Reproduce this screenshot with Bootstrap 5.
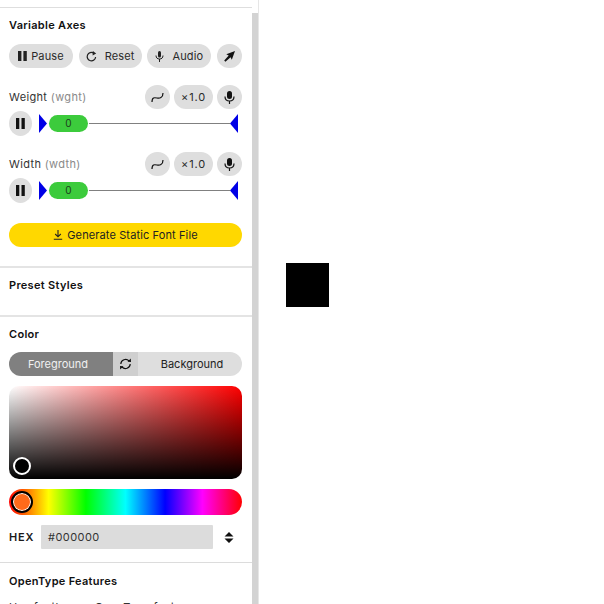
<!DOCTYPE html>
<html lang="en"><head><meta charset="utf-8">
<link href="https://cdn.jsdelivr.net/npm/bootstrap@5.3.0/dist/css/bootstrap.min.css" rel="stylesheet">
<style>
html,body{height:604px;overflow:hidden;background:#fff}
body{font-family:Inter,"Liberation Sans",sans-serif;color:#1a1a1a;font-size:11px}
.shell{height:604px;width:604px}
.side{width:259px;height:604px;border-right:1px solid #e6e6e6;overflow:hidden;flex:none}
.panel{width:252px;height:604px;overflow:hidden;flex:none}
.rail{width:6px;margin-top:13px;background:#d3d3d3;flex:none}
.topline{height:8px;border-bottom:1px solid #dedede}
.sect{padding:0 10px 0 9px}
.sect-axes{height:260px;border-bottom:2px solid #e4e4e4}
.sect-preset{height:49px;border-bottom:2px solid #e4e4e4}
.sect-color{height:246px;border-bottom:1px solid #dcdcdc}
.ttl{font-size:11px;font-weight:600;line-height:14px;color:#111;letter-spacing:.3px}
.ttl-axes{padding-top:10px}
.ttl-preset{padding-top:10px}
.ttl-color{padding-top:10px}
.pill{height:24px;background:#dedede;border-radius:12px;color:#2a2a2a;font-size:11px;letter-spacing:.15px;white-space:nowrap}
.p-pause{width:64px}.p-reset{width:63px}.p-audio{width:64px}.p-round{width:25px}.p-rate{width:39px;letter-spacing:.8px}
.toolrow{margin-top:12px}
.axis{height:24px;margin-top:17px}
.axis-two{margin-top:16px}
.axname{font-size:11px;letter-spacing:.35px;color:#333}
.axname span{color:#8a8a8a}
.acts{gap:4px}
.slider{margin-top:2px;height:25px}
.pround{width:23px;height:25px;background:#dedede;border-radius:50%;flex:none}
.track{flex:none;margin-left:7px;height:25px;width:199px}
.line{flex:1;height:1px;background:#808080;margin-left:1px}
.thumb{width:39px;height:17px;background:#3ccb3c;border-radius:8.5px;font-size:10px;color:#1d3d1d;line-height:17px;text-align:center;margin-left:2px}
.tri-l{width:8px;height:19px;background:#0000e6;clip-path:polygon(0 0,100% 50%,0 100%)}
.tri-r{width:8px;height:19px;background:#0000e6;clip-path:polygon(100% 0,0 50%,100% 100%)}
.gen{margin-top:20px;height:24px;background:#ffd800;border-radius:12px;font-size:11px;color:#222;letter-spacing:.12px}
.swap{margin-top:11px;height:24px;border-radius:12px;overflow:hidden;font-size:11px}
.fg{width:104px;background:#808080;color:#f0f0f0;padding-right:6px}
.mid{width:25px;background:#cfcfcf}
.bg2{flex:1;background:#dedede;color:#222;padding-left:4px}
.sv{position:relative;margin-top:10px;height:93px;border-radius:10px;background:linear-gradient(to top,#000,rgba(0,0,0,0)),linear-gradient(to right,#fff,#ff0000)}
.hue{position:relative;margin-top:10px;height:26px;border-radius:13px;background:linear-gradient(to right,#ff0000 0%,#ffff00 17%,#00ff00 33%,#00ffff 50%,#0000ff 67%,#ff00ff 83%,#ff0000 100%)}
.dot1{position:absolute;left:4px;bottom:4px;width:18px;height:18px;border-radius:50%;background:#000;border:2px solid #fff}
.dot2{position:absolute;left:2px;top:2px;width:22px;height:22px;border-radius:50%;background:#ff6a1a;border:2px solid #000;box-shadow:inset 0 0 0 1px #fff}
.hexrow{margin-top:10px;height:24px}
.hexlab{width:32px;font-weight:600;font-size:11px;letter-spacing:.8px;color:#1a1a1a}
.hexbox{width:172px;height:24px;background:#dcdcdc;border-radius:1px;padding-left:7px;line-height:24px;font-size:11px;letter-spacing:.45px;color:#333}
.updn{margin-left:11px}
.ttl-ot{padding-top:11px}
.otrow{margin-top:12px;font-size:11px;letter-spacing:.3px;color:#333;white-space:nowrap;line-height:14px}
.stage{flex:1;position:relative}
.blacksq{position:absolute;left:27px;top:263px;width:43px;height:44px;background:#000}
</style></head><body>
<div class="shell d-flex">
<div class="side d-flex">
<div class="panel">
<div class="topline"></div>
<div class="sect sect-axes">
<div class="ttl ttl-axes">Variable Axes</div>
<div class="d-flex justify-content-between toolrow">
<div class="pill p-pause d-flex align-items-center justify-content-center gap-1"><svg width="9" height="10" viewBox="0 0 9 10"><path d="M0 0h3.400v10H0zM5.400 0h3.400v10H5.400z" fill="#222"/></svg>Pause</div>
<div class="pill p-reset d-flex align-items-center justify-content-center gap-2"><svg width="11" height="11" viewBox="0 0 11 11"><path d="M9.600 6A4.200 4.200 0 1 1 7.600 2.100" fill="none" stroke="#222" stroke-width="1.200"/><path d="M6.800 0l3.400 2.500-3.600 2z" fill="#222"/></svg>Reset</div>
<div class="pill p-audio d-flex align-items-center justify-content-center gap-2"><svg width="9" height="11" viewBox="0 0 9 11"><rect x="3" y="0" width="3" height="6.400" rx="1.500" fill="#222"/><path d="M1 4.500c0 2.400 1.400 3.500 3.500 3.500S8 6.900 8 4.500M4.500 8v3" fill="none" stroke="#222" stroke-width="1"/></svg>Audio</div>
<div class="pill p-round d-flex align-items-center justify-content-center"><svg width="11" height="11" viewBox="0 0 11 11"><path d="M11 0L7.800 8.700 6.600 6.300 1.400 10.800 0.200 9.600 4.700 4.400 2.300 3.200z" fill="#111"/></svg></div>
</div>
<div class="d-flex align-items-center justify-content-between axis">
<div class="axname">Weight <span>(wght)</span></div>
<div class="d-flex acts">
<div class="pill p-round d-flex align-items-center justify-content-center"><svg width="13" height="11" viewBox="0 0 13 11"><path d="M1 10C1 5 3.500 5.500 6 6S12 6 12 1" fill="none" stroke="#111" stroke-width="1.200"/></svg></div>
<div class="pill p-rate d-flex align-items-center justify-content-center">×1.0</div>
<div class="pill p-round d-flex align-items-center justify-content-center"><svg width="11" height="13" viewBox="0 0 11 13"><rect x="3" y="0" width="5" height="8" rx="2.500" fill="#111"/><path d="M1 5.500c0 3 1.800 4.500 4.500 4.500S10 8.500 10 5.500M5.500 10v3" fill="none" stroke="#111" stroke-width="1.200"/></svg></div>
</div>
</div>
<div class="d-flex align-items-center slider">
<div class="pround d-flex align-items-center justify-content-center"><svg width="9" height="11" viewBox="0 0 9 11"><path d="M0 0h3.300v11H0zM5.500 0h3.300v11H5.500z" fill="#111"/></svg></div>
<div class="track d-flex align-items-center"><div class="tri-l"></div><div class="thumb">0</div><div class="line"></div><div class="tri-r"></div></div>
</div>
<div class="d-flex align-items-center justify-content-between axis axis-two">
<div class="axname">Width <span>(wdth)</span></div>
<div class="d-flex acts">
<div class="pill p-round d-flex align-items-center justify-content-center"><svg width="13" height="11" viewBox="0 0 13 11"><path d="M1 10C1 5 3.500 5.500 6 6S12 6 12 1" fill="none" stroke="#111" stroke-width="1.200"/></svg></div>
<div class="pill p-rate d-flex align-items-center justify-content-center">×1.0</div>
<div class="pill p-round d-flex align-items-center justify-content-center"><svg width="11" height="13" viewBox="0 0 11 13"><rect x="3" y="0" width="5" height="8" rx="2.500" fill="#111"/><path d="M1 5.500c0 3 1.800 4.500 4.500 4.500S10 8.500 10 5.500M5.500 10v3" fill="none" stroke="#111" stroke-width="1.200"/></svg></div>
</div>
</div>
<div class="d-flex align-items-center slider">
<div class="pround d-flex align-items-center justify-content-center"><svg width="9" height="11" viewBox="0 0 9 11"><path d="M0 0h3.300v11H0zM5.500 0h3.300v11H5.500z" fill="#111"/></svg></div>
<div class="track d-flex align-items-center"><div class="tri-l"></div><div class="thumb">0</div><div class="line"></div><div class="tri-r"></div></div>
</div>
<div class="gen d-flex align-items-center justify-content-center gap-1"><svg width="10" height="10" viewBox="0 0 10 10"><path d="M5 0v6.500M2.200 4l2.800 2.800L7.800 4M.8 9.300h8.400" fill="none" stroke="#222" stroke-width="1.100"/></svg>Generate Static Font File</div>
</div>
<div class="sect sect-preset"><div class="ttl ttl-preset">Preset Styles</div></div>
<div class="sect sect-color">
<div class="ttl ttl-color">Color</div>
<div class="d-flex swap">
<div class="fg d-flex align-items-center justify-content-center">Foreground</div>
<div class="mid d-flex align-items-center justify-content-center"><svg width="13" height="12" viewBox="0 0 13 12"><path d="M1.800 6A4.700 4.700 0 0 1 10 3M11.200 6A4.700 4.700 0 0 1 3 9" fill="none" stroke="#111" stroke-width="1.200"/><path d="M8.500 3.800l3.500.2-.2-3.500zM4.500 8.200L1 8l.2 3.500z" fill="#111"/></svg></div>
<div class="bg2 d-flex align-items-center justify-content-center">Background</div>
</div>
<div class="sv"><div class="dot1"></div></div>
<div class="hue"><div class="dot2"></div></div>
<div class="d-flex align-items-center hexrow">
<div class="hexlab">HEX</div>
<div class="hexbox">#000000</div>
<svg class="updn" width="10" height="11" viewBox="0 0 10 11"><path d="M5 0l4.500 4.500h-9zM5 11L.5 6.500h9z" fill="#111"/></svg>
</div>
</div>
<div class="sect">
<div class="ttl ttl-ot">OpenType Features</div>
<div class="otrow">Use font's own OpenType features</div>
</div>
</div>
<div class="rail"></div>
</div>
<div class="stage"><div class="blacksq"></div></div>
</div>
</body></html>
